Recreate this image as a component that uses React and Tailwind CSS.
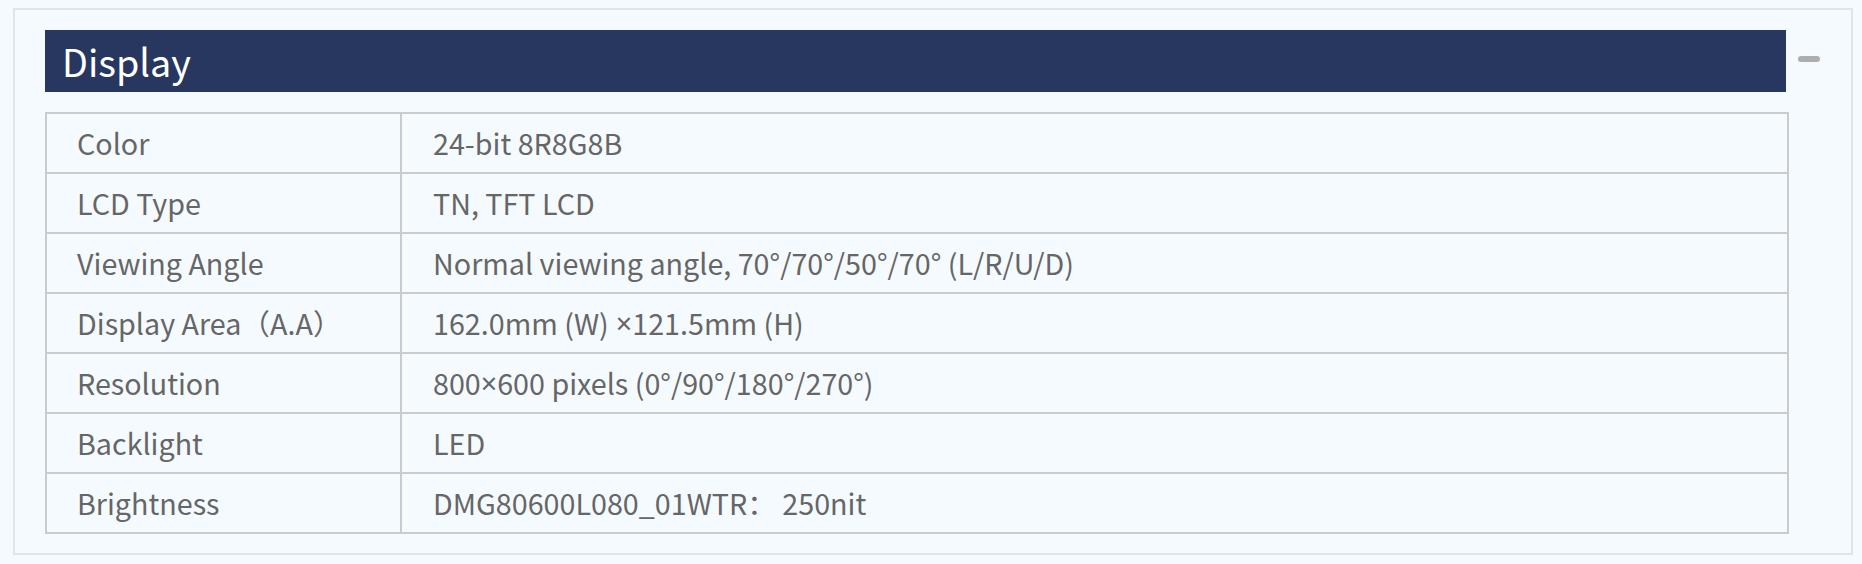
import React from 'react';

const Times = () => <span className="font-['Noto_Sans']">×</span>;

const specs = [
  ['Color', '24-bit 8R8G8B'],
  ['LCD Type', 'TN, TFT LCD'],
  ['Viewing Angle', 'Normal viewing angle, 70°/70°/50°/70° (L/R/U/D)'],
  ['Display Area（A.A）', <>162.0mm (W)<span className="pl-[7px]" /><Times />121.5mm (H)</>],
  ['Resolution', <>800<Times />600 pixels (0°/90°/180°/270°)</>],
  ['Backlight', 'LED'],
  ['Brightness', 'DMG80600L080_01WTR： 250nit'],
];

const App = () => {
  return (
    <div
      className="min-h-[564px] bg-[#f5faff] pt-[8px] pl-[13px]"
      style={{ fontFamily: '"Noto Sans CJK SC", "Noto Sans", sans-serif' }}
    >
      <div className="w-[1840px] h-[547px] border-2 border-[#e1e5e9] pt-[20px] pl-[30px]">
        {/* section header */}
        <div className="flex items-center">
          <div className="w-[1741px] h-[62px] bg-[#283760] flex items-center pl-[17px] text-white text-[37.7px] leading-none">
            Display
          </div>
          <div className="ml-[12px] mt-[-4px] w-[22px] h-[6px] rounded-[3px] bg-[#adadad]" />
        </div>

        {/* spec table */}
        <div className="mt-[20px] w-[1744px] border-2 border-[#cbcbcb]">
          {specs.map(([label, value], i) => (
            <div
              key={label}
              className={
                i > 0
                  ? 'flex h-[60px] text-[28.7px] text-[#666] border-t-2 border-[#cbcbcb]'
                  : 'flex h-[58px] text-[28.7px] text-[#666]'
              }
            >
              <div className="w-[355px] flex items-center pl-[30px] border-r-2 border-[#cbcbcb]">
                {label}
              </div>
              <div className="flex-1 flex items-center pl-[31px]">{value}</div>
            </div>
          ))}
        </div>
      </div>
    </div>
  );
};

export default App;
